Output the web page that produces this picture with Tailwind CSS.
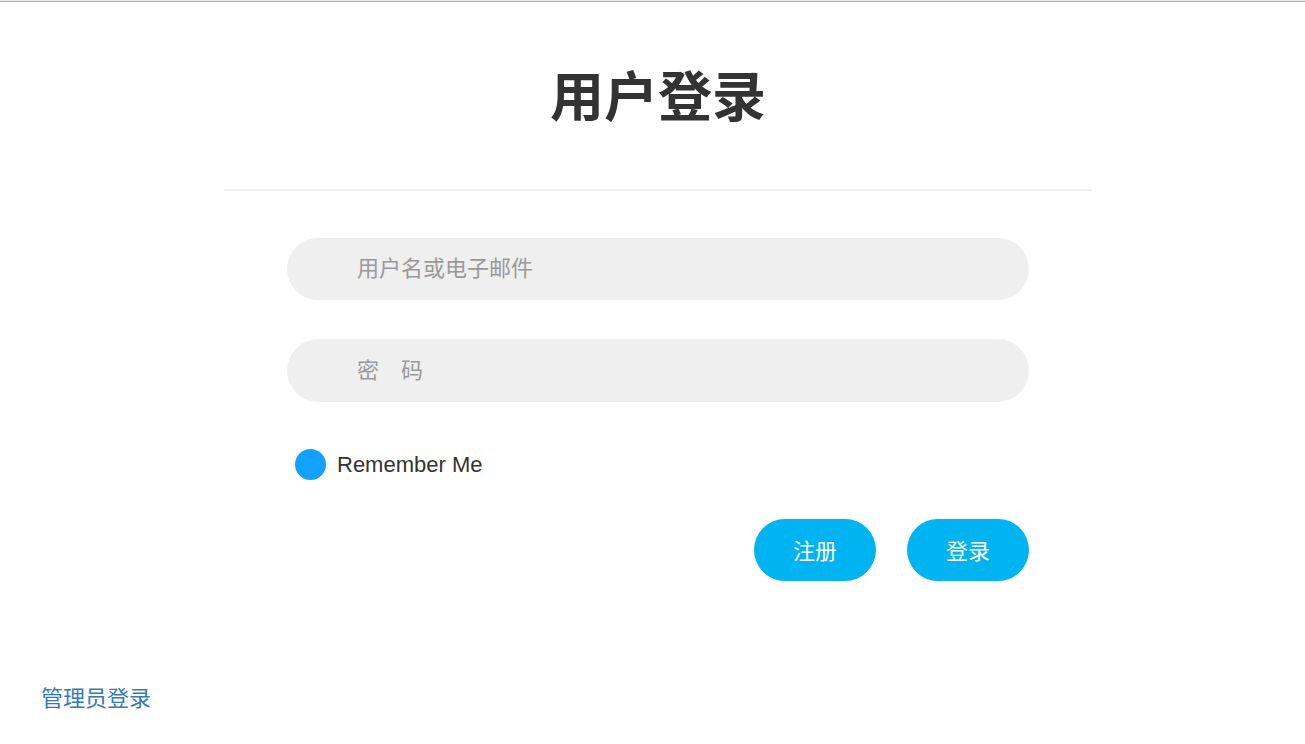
<!DOCTYPE html>
<html lang="zh-CN" class="border-t border-[#ebebeb]">
<head>
<meta charset="utf-8">
<meta name="viewport" content="width=device-width, initial-scale=1">
<title>用户登录</title>
<script src="https://cdn.jsdelivr.net/npm/@tailwindcss/browser@4"></script>
</head>
<body class="border-t border-[#b0b0b0] bg-white font-['Liberation_Sans','Noto_Sans_CJK_SC',sans-serif] text-[22px] leading-[31px] text-[#333]">
<div class="pl-[11px]">
<main class="mx-auto w-full max-w-[868px]">
  <h1 class="border-b-2 border-[#efefef] pt-[58px] pb-[53px] text-center text-[54px] leading-[76px] font-bold">用户登录</h1>
  <form class="px-[63px] pt-[47px]">
    <input type="text" aria-label="用户名或电子邮件" placeholder="用户名或电子邮件" class="block h-[62px] w-full rounded-full bg-[#efefef] px-[70px] outline-none placeholder:text-[#999]">
    <input type="password" aria-label="密码" placeholder="密　码" class="mt-[39px] block h-[63px] w-full rounded-full bg-[#efefef] px-[70px] outline-none placeholder:text-[#999]">
    <label class="mt-[47px] ml-2 flex w-fit items-center gap-[11px]">
      <input type="checkbox" class="size-[31px] appearance-none rounded-full bg-[#12a1ff]">
      <span>Remember Me</span>
    </label>
    <div class="mt-[39px] flex justify-end gap-[31px]">
      <button type="button" class="h-[62px] w-[122px] rounded-full bg-[#00b4f1] pt-0.5 text-white">注册</button>
      <button type="submit" class="h-[62px] w-[122px] rounded-full bg-[#00b4f1] pt-0.5 text-white">登录</button>
    </div>
  </form>
</main>
</div>
<footer class="px-[41px] pt-[102px]"><a href="#" class="text-[#337ab7]">管理员登录</a></footer>
</body>
</html>
